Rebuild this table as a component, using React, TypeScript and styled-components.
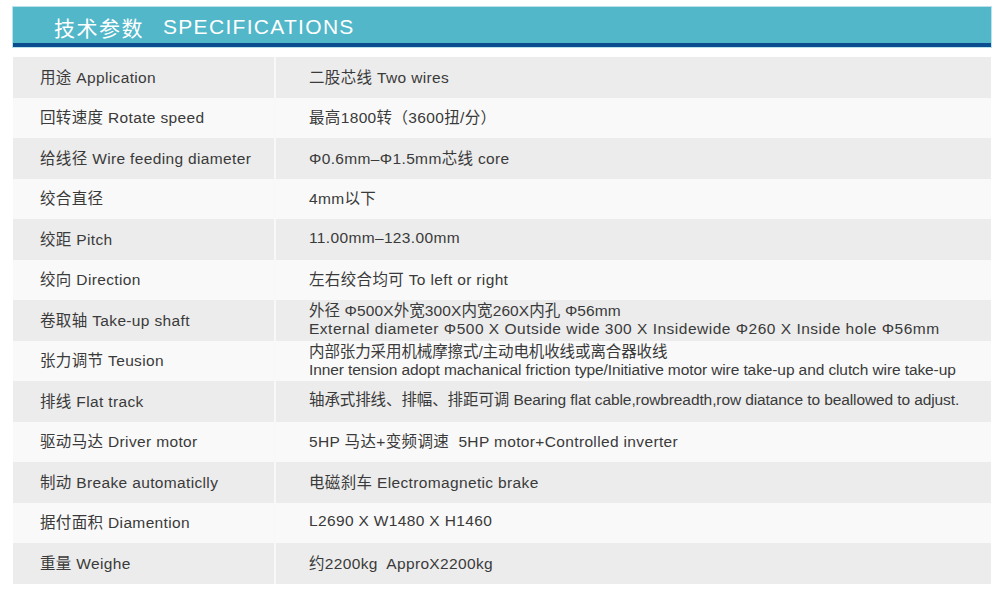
import styled, { createGlobalStyle } from 'styled-components';

const GlobalStyle = createGlobalStyle`
  html, body {
    margin: 0;
    padding: 0;
    background: #ffffff;
  }
  body {
    font-family: "Liberation Sans", "Noto Sans CJK SC", sans-serif;
  }
`;

const Page = styled.div`
  width: 978px;
  padding: 7px 9px 0 13px;
`;

const Header = styled.header`
  height: 40px;
  box-sizing: border-box;
  padding: 3px 0 0 41px;
  background-color: #52b7c9;
  border-bottom: 4px solid #0c4d8f;
  box-shadow: 0 0 0 1px #b9e2ea;
  display: flex;
  align-items: center;
  gap: 19px;
  color: #ffffff;
  font-size: 21px;
  letter-spacing: 1.3px;
`;

const HeaderCn = styled.span`
  font-family: "Noto Sans CJK SC", sans-serif;
  letter-spacing: 1.5px;
`;

const Table = styled.div`
  margin-top: 10px;
  display: flex;
  flex-direction: column;
`;

const Row = styled.div`
  display: grid;
  grid-template-columns: 261px 715px;
  column-gap: 2px;
  height: 40.5px;
  background-color: #f8f8f8;
`;

const Cell = styled.div<{ $shade: boolean; $wide?: boolean; $multi?: boolean }>`
  background-color: ${p => (p.$shade ? '#ececec' : '#f9f9f9')};
  display: flex;
  flex-direction: column;
  justify-content: center;
  padding-left: ${p => (p.$wide ? '33px' : '27px')};
  padding-bottom: ${p => (p.$multi ? '0' : '3px')};
  color: #3a3a3a;
  font-size: 15.5px;
  letter-spacing: 0.35px;
  white-space: pre;
`;

const Narrow = styled.span<{ $track?: number }>`
  font-size: 15.5px;
  letter-spacing: ${p => p.$track ?? -0.1}px;
  line-height: 18px;
`;

type Line = { text: string; track?: number };
type Spec = { label: string; value: Line[]; narrow?: boolean };

const specs: Spec[] = [
  { label: '用途 Application', value: [{ text: '二股芯线 Two wires' }] },
  { label: '回转速度 Rotate speed', value: [{ text: '最高1800转（3600扭/分）' }] },
  { label: '给线径 Wire feeding diameter', value: [{ text: 'Φ0.6mm–Φ1.5mm芯线 core' }] },
  { label: '绞合直径', value: [{ text: '4mm以下' }] },
  { label: '绞距 Pitch', value: [{ text: '11.00mm–123.00mm' }] },
  { label: '绞向 Direction', value: [{ text: '左右绞合均可 To left or right' }] },
  {
    label: '卷取轴 Take-up shaft',
    value: [
      { text: '外径 Φ500X外宽300X内宽260X内孔 Φ56mm', track: 0.1 },
      { text: 'External diameter Φ500 X Outside wide 300 X Insidewide Φ260 X Inside hole Φ56mm', track: 0.5 },
    ],
    narrow: true,
  },
  {
    label: '张力调节 Teusion',
    value: [
      { text: '内部张力采用机械摩擦式/主动电机收线或离合器收线' },
      { text: 'Inner tension adopt machanical friction type/Initiative motor wire take-up and clutch wire take-up' },
    ],
    narrow: true,
  },
  {
    label: '排线 Flat track',
    value: [{ text: '轴承式排线、排幅、排距可调 Bearing flat cable,rowbreadth,row diatance to beallowed to adjust.' }],
    narrow: true,
  },
  { label: '驱动马达 Driver motor', value: [{ text: '5HP 马达+变频调速  5HP motor+Controlled inverter' }] },
  { label: '制动 Breake automaticlly', value: [{ text: '电磁刹车 Electromagnetic brake' }] },
  { label: '据付面积 Diamention', value: [{ text: 'L2690 X W1480 X H1460' }] },
  { label: '重量 Weighe', value: [{ text: '约2200kg  ApproX2200kg' }] },
];

export default function App() {
  return (
    <>
      <GlobalStyle />
      <Page>
        <Header>
          <HeaderCn>技术参数</HeaderCn>
          <span>SPECIFICATIONS</span>
        </Header>
        <Table>
          {specs.map((s, i) => (
            <Row key={s.label}>
              <Cell $shade={i % 2 === 0}>{s.label}</Cell>
              <Cell $shade={i % 2 === 0} $wide $multi={s.value.length > 1}>
                {s.value.map(v =>
                  s.narrow ? (
                    <Narrow key={v.text} $track={v.track}>
                      {v.text}
                    </Narrow>
                  ) : (
                    <span key={v.text}>{v.text}</span>
                  )
                )}
              </Cell>
            </Row>
          ))}
        </Table>
      </Page>
    </>
  );
}
